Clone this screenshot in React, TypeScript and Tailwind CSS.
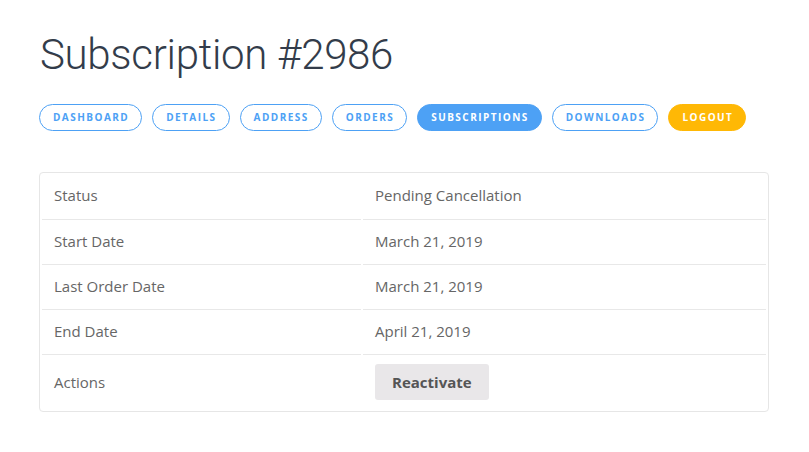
import React from "react";

const navItems = [
  { label: "DASHBOARD", kind: "outline" },
  { label: "DETAILS", kind: "outline" },
  { label: "ADDRESS", kind: "outline" },
  { label: "ORDERS", kind: "outline" },
  { label: "SUBSCRIPTIONS", kind: "active" },
  { label: "DOWNLOADS", kind: "outline" },
  { label: "LOGOUT", kind: "logout" },
];

const rows = [
  { label: "Status", value: "Pending Cancellation", h: "h-[47px]" },
  { label: "Start Date", value: "March 21, 2019", h: "h-[45px]" },
  { label: "Last Order Date", value: "March 21, 2019", h: "h-[45px]" },
  { label: "End Date", value: "April 21, 2019", h: "h-[45px]" },
];

export default function App() {
  return (
    <div className="min-h-[452px] bg-white pl-[39px] pr-[40px] pt-[30px]" style={{ fontFamily: '"Open Sans", sans-serif' }}>
      <h1
        className="pl-[1px] text-[42px] font-light leading-[50px] tracking-[-0.3px] text-[#333c4a]"
        style={{ fontFamily: 'Roboto, sans-serif' }}
      >
        Subscription #2986
      </h1>
      <div className="mt-[24px] flex gap-[10px]">
        {navItems.map((n) => {
          const cls =
            n.kind === "active"
              ? "bg-[#4da1f5] border-[#4da1f5] text-white"
              : n.kind === "logout"
              ? "bg-[#ffb805] border-[#ffb805] text-white"
              : "bg-white border-[#4da1f5] text-[#4da1f5]";
          return (
            <div
              key={n.label}
              className={`flex h-[27px] items-center rounded-full border pl-[13px] pr-[12px] text-[10px] font-bold tracking-[1.46px] ${cls}`}
            >
              {n.label}
            </div>
          );
        })}
      </div>
      <div className="mt-[41px] rounded-[4px] border border-[#e6e6e6] px-[2px]">
        <div className="grid grid-cols-[319px_403px] gap-x-[2px]">
          {rows.map((r) => (
            <React.Fragment key={r.label}>
              <div className={`flex ${r.h} items-center border-b border-[#e8e8e8] pb-[2px] pl-[12px] text-[15px] text-[#666666]`}>
                {r.label}
              </div>
              <div className={`flex ${r.h} items-center border-b border-[#e8e8e8] pb-[2px] pl-[12px] text-[15px] text-[#666666]`}>
                {r.value}
              </div>
            </React.Fragment>
          ))}
          <div className="flex h-[56px] items-center pb-[2px] pl-[12px] text-[15px] text-[#666666]">Actions</div>
          <div className="flex h-[56px] items-center pb-[2px] pl-[12px]">
            <div className="flex h-[36px] items-center rounded-[3px] bg-[#e9e7e9] px-[17px] text-[15px] font-bold text-[#555555]">
              Reactivate
            </div>
          </div>
        </div>
      </div>
    </div>
  );
}
